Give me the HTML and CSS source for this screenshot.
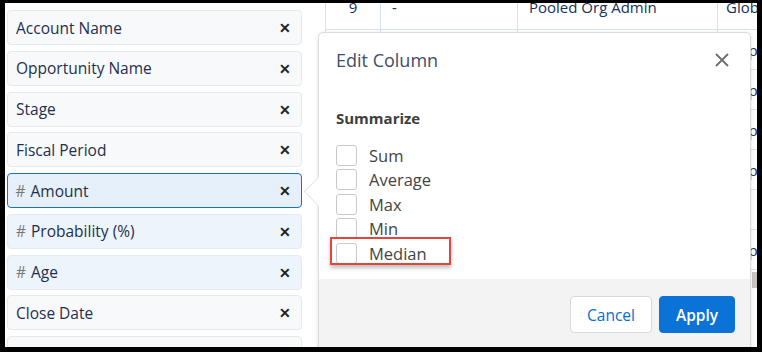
FILE: index.html
```html
<!DOCTYPE html>
<html lang="en">
<head>
<meta charset="UTF-8">
<title>Edit Column</title>
<link rel="stylesheet" href="styles.css">
</head>
<body>
<div class="screen">
  <ul class="fields">
    <li class="pill"><span class="name">Account Name</span><span class="remove">&#x2715;</span></li>
    <li class="pill"><span class="name">Opportunity Name</span><span class="remove">&#x2715;</span></li>
    <li class="pill"><span class="name">Stage</span><span class="remove">&#x2715;</span></li>
    <li class="pill"><span class="name">Fiscal Period</span><span class="remove">&#x2715;</span></li>
    <li class="pill num active"><span class="name"><i>#</i>Amount</span><span class="remove">&#x2715;</span></li>
    <li class="pill num"><span class="name"><i>#</i>Probability (%)</span><span class="remove">&#x2715;</span></li>
    <li class="pill num"><span class="name"><i>#</i>Age</span><span class="remove">&#x2715;</span></li>
    <li class="pill"><span class="name">Close Date</span><span class="remove">&#x2715;</span></li>
    <li class="pill"><span class="name">&nbsp;</span></li>
  </ul>

  <div class="preview">
    <table class="grid">
      <colgroup><col class="w1"><col class="w2"><col class="w3"><col class="w4"></colgroup>
      <tr class="first"><td class="c1">9</td><td>-</td><td>Pooled Org Admin</td><td class="c4">Global</td></tr>
      <tr><td></td><td></td><td></td><td class="c4">Stop</td></tr>
      <tr><td></td><td></td><td></td><td class="c4">Stop</td></tr>
      <tr><td></td><td></td><td></td><td class="c4">Stop</td></tr>
      <tr><td></td><td></td><td></td><td class="c4">Stop</td></tr>
      <tr><td></td><td></td><td></td><td class="c4">1st</td></tr>
      <tr><td></td><td></td><td></td><td class="c4">Stop</td></tr>
    </table>
    <div class="scroll"></div>
  </div>

  <div class="popover">
    <div class="nub"></div>
    <div class="pop-head">
      <h2>Edit Column</h2>
      <svg class="close" width="16" height="16" viewBox="0 0 16 16"><path d="M2 2 L14 14 M14 2 L2 14" stroke="#706e6b" stroke-width="1.8" fill="none"/></svg>
    </div>
    <div class="pop-body">
      <h3>Summarize</h3>
      <label class="check"><span class="box"></span>Sum</label>
      <label class="check"><span class="box"></span>Average</label>
      <label class="check"><span class="box"></span>Max</label>
      <label class="check"><span class="box"></span>Min</label>
      <label class="check"><span class="box"></span>Median</label>
      <div class="highlight"></div>
    </div>
    <div class="pop-foot">
      <button class="btn cancel">Cancel</button>
      <button class="btn apply">Apply</button>
    </div>
  </div>
</div>
</body>
</html>
```

FILE: styles.css
```css
html, body
{	margin:0;
	background:#000;
	font-family:"Open Sans", "Noto Sans", sans-serif;
}
.screen
{	position:relative;
	margin:3px 0 0 5px;
	width:752px;
	height:344px;
	background:#fff;
	overflow:hidden;
	display:flex;
}
/* field list on the left */
.fields
{	list-style:none;
	margin:0;
	padding:7px 0 0 2px;
	width:295px;
	flex:none;
}
.pill
{	box-sizing:border-box;
	height:35px;
	margin-bottom:5.75px;
	display:flex;
	align-items:center;
	justify-content:space-between;
	padding:0 9px 0 8px;
	background:#f8f9fb;
	border:1px solid #e6e8ec;
	border-radius:4px;
	color:#1f2f4d;
	font-size:15.5px;
}
.pill.num
{	background:#edf4fc;
	border-color:#e2ebf5;
}
.pill.active
{	background:#e6f0fa;
	border:1.5px solid #1b70c9;
	padding-left:7.5px;
}
.pill i
{	font-style:normal;
	color:#777;
	margin-right:5px;
}
.remove
{	font-size:14px;
	font-weight:bold;
	color:#222;
	margin-right:1px;
}
/* table underneath */
.preview
{	flex:1;
	padding-left:23px;
	position:relative;
}
.grid
{	border-collapse:collapse;
	table-layout:fixed;
	width:592px;
	margin-top:-17px;
	color:#16325c;
	font-size:15px;
}
.w1 { width:55px; }
.w2 { width:137px; }
.w3 { width:200px; }
.w4 { width:200px; }
.grid td
{	height:39px;
	padding:0 0 0 11px;
	border:1px solid #d6e2ef;
	white-space:nowrap;
	overflow:hidden;
}
.grid .first td
{	padding-bottom:3px;
}
.grid td.c1
{	text-align:center;
	padding-left:0;
}
.grid td.c4
{	padding-left:8px;
}
.scroll
{	position:absolute;
	left:450px;
	top:269px;
	width:10px;
	height:16px;
	background:#c9c4c0;
}
/* edit column popover */
.popover
{	position:absolute;
	left:313px;
	top:29px;
	width:433px;
	height:330px;
	box-sizing:border-box;
	background:#fff;
	border:1px solid #dcdcdc;
	border-radius:5px;
	box-shadow:0 1px 4px rgba(0,0,0,0.12);
}
.nub
{	position:absolute;
	left:-11px;
	top:148px;
	width:20px;
	height:20px;
	background:#fff;
	border-left:1px solid #e4e4e4;
	border-bottom:1px solid #e4e4e4;
	transform:rotate(45deg);
}
.pop-head
{	display:flex;
	justify-content:space-between;
	align-items:center;
	height:54px;
	padding:0 20px 0 17px;
}
.pop-head h2
{	margin:0;
	font-weight:normal;
	font-size:18px;
	color:#3e4d68;
}
.pop-body
{	position:relative;
	padding:21px 17px 0 17px;
	height:175px;
}
.pop-body h3
{	margin:0 0 15px 0;
	font-size:15px;
	font-weight:bold;
	color:#3e3e3c;
	line-height:20px;
}
.check
{	display:flex;
	align-items:center;
	height:24.5px;
	font-size:16.5px;
	color:#444;
}
.box
{	width:19px;
	height:19px;
	border:1px solid #c9c9c9;
	border-radius:3px;
	margin-right:12px;
	background:#fff;
}
.highlight
{	position:absolute;
	left:11px;
	top:150px;
	width:117px;
	height:24px;
	border:2px solid #e8423c;
	box-shadow:0 3px 4px rgba(0,0,0,0.25);
}
.pop-foot
{	position:absolute;
	left:0;
	right:0;
	top:246px;
	bottom:0;
	background:#f3f3f3;
	display:flex;
	justify-content:flex-end;
	align-items:flex-start;
	gap:7px;
	padding:17px 15px 0 0;
	border-radius:0 0 5px 5px;
}
.btn
{	height:37px;
	border-radius:4px;
	font-family:inherit;
	font-size:15.5px;
}
.cancel
{	width:82px;
	background:#fff;
	border:1px solid #d8d8d8;
	color:#0070d2;
}
.apply
{	width:76px;
	background:#0b72d6;
	border:1px solid #0b72d6;
	color:#fff;
	font-weight:600;
}
```
